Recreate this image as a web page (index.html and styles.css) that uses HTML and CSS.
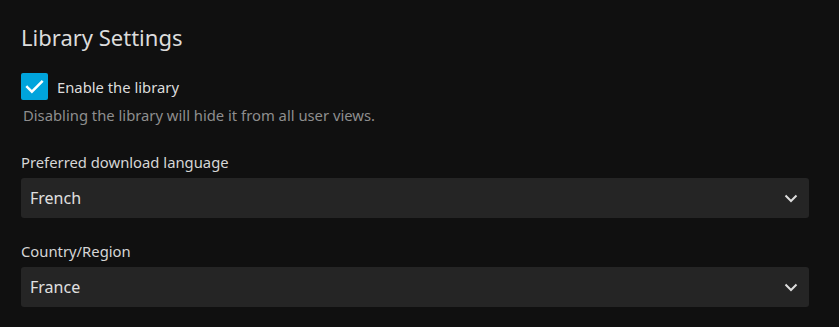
FILE: index.html
```html
<!DOCTYPE html>
<html lang="en">
<head>
  <meta charset="UTF-8">
  <title>Library Settings</title>
  <link rel="stylesheet" href="styles.css">
</head>
<body>

<div class="settings">
  <h2 class="section-title">Library Settings</h2>

  <div class="checkbox-field">
    <label class="checkbox-row">
      <span class="checkbox checked">
        <svg viewBox="0 0 24 24" width="25" height="25"><path d="M5 12.5l4.5 4.5L19 7.5" fill="none" stroke="#fff" stroke-width="2.4" stroke-linecap="square"/></svg>
      </span>
      <span class="checkbox-label">Enable the library</span>
    </label>
    <div class="field-description">Disabling the library will hide it from all user views.</div>
  </div>

  <div class="select-field">
    <label class="field-label">Preferred download language</label>
    <div class="select">
      <span class="select-value">French</span>
      <svg class="chevron" viewBox="0 0 14 10" width="14" height="10"><path d="M1.5 2.5L7 8l5.5-5.5" fill="none" stroke="#ddd" stroke-width="2"/></svg>
    </div>
  </div>

  <div class="select-field">
    <label class="field-label">Country/Region</label>
    <div class="select">
      <span class="select-value">France</span>
      <svg class="chevron" viewBox="0 0 14 10" width="14" height="10"><path d="M1.5 2.5L7 8l5.5-5.5" fill="none" stroke="#ddd" stroke-width="2"/></svg>
    </div>
  </div>
</div>

</body>
</html>
```

FILE: styles.css
```css
body {
  margin: 0;
  background-color: #101010;
  color: rgba(255, 255, 255, 0.87);
  font-family: "Noto Sans", sans-serif;
  height: 327px;
  overflow: hidden;
}

.settings {
  padding: 20px 30px 0 21px;
  display: flex;
  flex-direction: column;
}

.section-title {
  margin: 0 0 19px;
  font-size: 22px;
  font-weight: 400;
  line-height: 34px;
  color: #dcdcdc;
}

.checkbox-field {
  margin-bottom: 27px;
}

.checkbox-row {
  display: flex;
  align-items: center;
  gap: 9px;
}

.checkbox {
  width: 27px;
  height: 27px;
  border-radius: 2px;
  background: #00a4dc;
  display: flex;
  align-items: center;
  justify-content: center;
}

.checkbox-label {
  font-size: 14.8px;
  color: #dcdcdc;
}

.field-description {
  margin: 5px 0 0 2px;
  font-size: 14.8px;
  color: #8e8e8e;
}

.select-field {
  display: flex;
  flex-direction: column;
  margin-bottom: 23px;
}

.field-label {
  font-size: 14.8px;
  color: #d6d6d6;
  line-height: 20px;
  margin-bottom: 6px;
}

.select {
  height: 40px;
  background: #252525;
  border-radius: 3px;
  display: flex;
  align-items: center;
  justify-content: space-between;
  padding: 0 11px 0 9px;
}

.select-value {
  font-size: 16px;
  color: #e0e0e0;
}

.chevron {
  display: block;
}
```
